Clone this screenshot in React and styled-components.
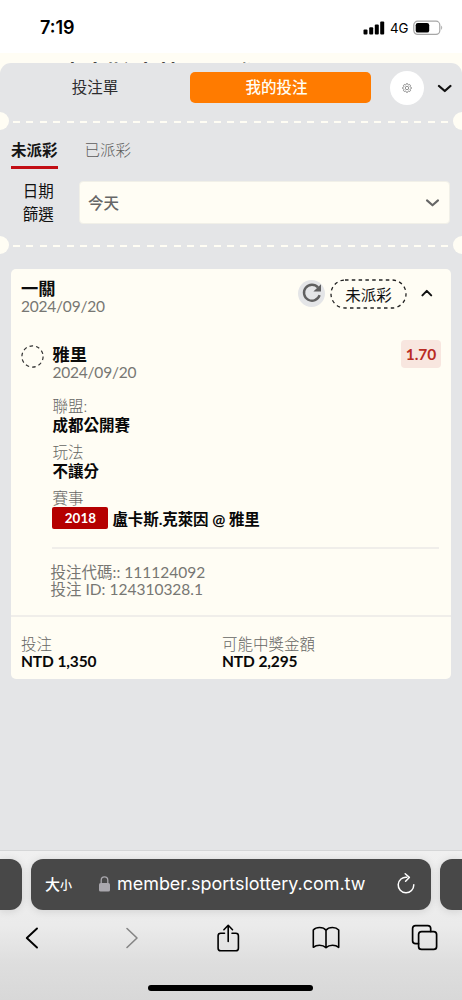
import React from 'react';
import styled, { createGlobalStyle } from 'styled-components';

const GlobalStyle = createGlobalStyle`
  * { box-sizing: border-box; }
  body {
    margin: 0;
    background: #fff;
    font-family: Lato, "Noto Sans CJK TC", sans-serif;
    -webkit-font-smoothing: antialiased;
  }
  svg { display: block; flex: none; }
`;

const Phone = styled.div`
  width: 462px;
  height: 1000px;
  overflow: hidden;
  display: flex;
  flex-direction: column;
  background: #fffdf4;
`;

const StatusBar = styled.header`
  height: 53px;
  flex: none;
  display: flex;
  align-items: center;
  justify-content: space-between;
  padding: 2px 18px 0 40px;
  background: #fff;
  font-family: Inter, sans-serif;
  color: #000;
`;

const Clock = styled.span`
  font-size: 18px;
  font-weight: 600;
`;

const StatusIcons = styled.div`
  display: flex;
  align-items: center;
  gap: 5px;
`;

const Network = styled.span`
  width: 18px;
  font-size: 13.3px;
  font-weight: 400;
  line-height: 16px;
`;

const PageBehind = styled.div`
  height: 10px;
  flex: none;
  overflow: hidden;
  padding-left: 62px;
  font-size: 22.4px;
  font-weight: 700;
  line-height: 30px;
  white-space: pre;
  color: #111;
`;

const PageTitle = styled.div`
  padding-top: 6px;
`;

const Sheet = styled.main`
  height: 787px;
  flex: none;
  border-radius: 11px 11px 0 0;
  background: #e4e5e7;
`;

const SheetHeader = styled.div`
  height: 49px;
  display: flex;
  align-items: center;
  padding-right: 9px;
`;

const HeaderTab = styled.div`
  width: ${(p) => (p.$active ? 181 : 190)}px;
  height: 31px;
  padding-right: ${(p) => (p.$active ? 8 : 0)}px;
  line-height: 31px;
  border-radius: 5px;
  text-align: center;
  font-size: 15.5px;
  font-weight: ${(p) => (p.$active ? 500 : 400)};
  color: ${(p) => (p.$active ? '#fffdf4' : '#2c2c2e')};
  background: ${(p) => (p.$active ? '#ff7b00' : 'transparent')};
`;

const SettingsButton = styled.div`
  width: 34px;
  height: 34px;
  margin: 0 13px 0 19px;
  border-radius: 50%;
  display: flex;
  align-items: center;
  justify-content: center;
  background: #fff;
`;

const Perforation = styled.div`
  height: 18px;
  display: flex;
  align-items: center;
  justify-content: space-between;
`;

const LowerPerforation = styled(Perforation)`
  margin-top: 12px;
`;

const Notch = styled.div`
  width: 9px;
  height: 18px;
  background: #fffdf4;
  border-radius: ${(p) => (p.$right ? '9px 0 0 9px' : '0 9px 9px 0')};
`;

const Dashes = styled.div`
  width: 436px;
  height: 2px;
  margin-top: 2px;
  background: repeating-linear-gradient(90deg, #fffdf4 0 7px, transparent 7px 13.38px);
`;

const SubTabs = styled.nav`
  height: 51px;
  display: flex;
  gap: 27px;
  padding: 9px 11px 0;
`;

const SubTab = styled.div`
  height: 30px;
  line-height: 22px;
  font-size: 15.5px;
  font-weight: ${(p) => (p.$active ? 700 : 300)};
  color: ${(p) => (p.$active ? '#151515' : '#5c5c5c')};
  border-bottom: 3.5px solid ${(p) => (p.$active ? '#c20d14' : 'transparent')};
`;

const FilterRow = styled.div`
  height: 43px;
  display: flex;
  align-items: center;
  padding-right: 12px;
`;

const FilterLabel = styled.div`
  width: 78.5px;
  padding-right: 2px;
  font-size: 15.5px;
  line-height: 22.5px;
  text-align: center;
  color: #111;
`;

const Select = styled.div`
  flex: 1;
  height: 43px;
  display: flex;
  align-items: center;
  justify-content: space-between;
  padding: 0 9px 1px 8.5px;
  border: 1px solid #f1f0e8;
  border-radius: 4px;
  background: #fffdf4;
  font-size: 15.5px;
  font-weight: 500;
  color: #666;
`;

const Card = styled.section`
  width: 440px;
  height: 410px;
  margin: 15px 0 0 11px;
  border-radius: 5px;
  background: #fffdf4;
  display: flex;
  flex-direction: column;
`;

const CardHeader = styled.div`
  height: 68px;
  display: flex;
  justify-content: space-between;
  padding: 9px 17px 0 10px;
`;

const Actions = styled.div`
  height: 30px;
  display: flex;
  align-items: center;
`;

const RefreshButton = styled.div`
  width: 27px;
  height: 27px;
  margin: 0 5px 0 0;
  border-radius: 50%;
  display: flex;
  align-items: center;
  justify-content: center;
  background: #e4e5e7;
`;

const StatusPill = styled.div`
  position: relative;
  width: 77px;
  height: 30px;
  margin: 2px 13px 0 0;
  line-height: 32px;
  text-align: center;
  font-size: 15.5px;
  color: #111;
`;

const PillOutline = styled.svg`
  position: absolute;
  inset: 0;
`;

const Title = styled.div`
  height: 19px;
  line-height: 21px;
  font-size: 17.3px;
  font-weight: 700;
  color: #0c0c0c;
`;

const Caption = styled.div`
  height: 18px;
  line-height: 18px;
  font-size: 15.5px;
  font-weight: ${(p) => (p.$light ? 300 : 400)};
  color: ${(p) => (p.$light ? '#666663' : '#777773')};
  white-space: nowrap;
`;

const DateText = styled(Caption)`
  letter-spacing: -0.22px;
`;

const Code = styled(Caption)`
  height: 17px;
  line-height: 17px;
`;

const Value = styled.div`
  height: 20px;
  line-height: 20px;
  font-size: 15.5px;
  font-weight: 700;
  color: #080808;
  white-space: nowrap;
`;

const Amount = styled(Value)`
  line-height: 17px;
  letter-spacing: -0.1px;
`;

const MatchName = styled(Value)`
  line-height: 22px;
  letter-spacing: -0.08px;
`;

const Selection = styled.div`
  height: 52px;
  display: flex;
  padding: 8px 10px 0 10px;
`;

const SelectionInfo = styled.div`
  flex: 1;
  margin-top: -1px;
  padding-left: 8.5px;
`;

const Odds = styled.div`
  width: 40px;
  height: 28px;
  margin-top: -5px;
  line-height: 29px;
  text-align: center;
  border-radius: 4px;
  background: #f8e6df;
  color: #b92b23;
  font-size: 15.5px;
  font-weight: 700;
`;

const Details = styled.div`
  height: 160px;
  margin: 0 12px 0 41px;
  padding: 8px 0 0 0.4px;
  border-bottom: 2px solid #f0eeea;
`;

const Field = styled.div`
  height: 46px;
`;

const Match = styled.div`
  display: flex;
  align-items: center;
  gap: 4px;
  height: 22px;
`;

const MatchNumber = styled.span`
  width: 56px;
  height: 22px;
  line-height: 23px;
  border-radius: 2px;
  text-align: center;
  font-size: 13.4px;
  font-weight: 700;
  color: #fff;
  background: #b50000;
`;

const Codes = styled.div`
  height: 68px;
  padding: 15px 0 0 39.5px;
  border-bottom: 2px solid #f0eeea;
`;

const Totals = styled.div`
  display: flex;
  padding: 18px 10px 0;
`;

const Total = styled.div`
  width: 201px;
`;

const BrowserChrome = styled.footer`
  height: 150px;
  flex: none;
  padding-top: 8px;
  border-top: 1px solid #d5d6d7;
  background: linear-gradient(#f0f0f0 0, #ebebeb 50%, #dedede 75%, #d8d8d8 100%);
`;

const AddressRow = styled.div`
  height: 51px;
  display: flex;
  gap: 9px;
`;

const SideTab = styled.div`
  width: 22px;
  height: 51px;
  background: #484848;
  border-radius: ${(p) => (p.$right ? '12px 0 0 12px' : '0 12px 12px 0')};
  box-shadow: 0 1px 8px rgba(0, 0, 0, 0.12);
`;

const AddressBar = styled.div`
  width: 400px;
  height: 51px;
  display: flex;
  align-items: center;
  padding: 0 16px 2px 14px;
  border-radius: 12px;
  background: #484848;
  box-shadow: 0 1px 8px rgba(0, 0, 0, 0.12);
  color: #fff;
`;

const TextSize = styled.div`
  width: 54px;
  font-size: 15px;
  font-weight: 500;
  white-space: nowrap;
`;

const SmallGlyph = styled.span`
  font-size: 12px;
`;

const Url = styled.div`
  flex: 1;
  padding-left: 7px;
  font-family: Inter, sans-serif;
  font-size: 17.95px;
`;

const Toolbar = styled.div`
  height: 55px;
  margin-left: -17px;
  display: grid;
  grid-template-columns: repeat(5, 98px);
  align-items: center;
  justify-items: center;
`;

const HomeIndicator = styled.div`
  width: 165px;
  height: 6px;
  margin: 20px 0 0 148px;
  border-radius: 3px;
  background: #000;
`;

const line = { fill: 'none', strokeLinecap: 'round', strokeLinejoin: 'round' };

const gearPath = (() => {
  const points = [];
  for (let i = 0; i < 48; i += 1) {
    const a = (i / 48) * Math.PI * 2;
    const r = 3.95 + 0.5 * Math.max(-1, Math.min(1, 1.7 * Math.cos(a * 8)));
    points.push(`${(5 + r * Math.cos(a)).toFixed(2)} ${(5 + r * Math.sin(a)).toFixed(2)}`);
  }
  return `M${points.join('L')}Z`;
})();

const Signal = () => (
  <svg width="22" height="14" viewBox="0 0 22 14">
    <rect x="0.5" y="8.5" width="4" height="5" rx="1" />
    <rect x="6.2" y="6.3" width="4" height="7.2" rx="1" />
    <rect x="11.8" y="3.5" width="4" height="10" rx="1" />
    <rect x="17.2" y="0.6" width="4" height="12.9" rx="1" />
  </svg>
);

const Battery = () => (
  <svg width="31" height="16" viewBox="0 0 31 16">
    <rect x="0.8" y="1.2" width="26" height="13.2" rx="3.8" fill="none" stroke="#a6a6a6" strokeWidth="1.2" />
    <rect x="2.7" y="3" width="13.5" height="9.6" rx="2.2" />
    <path d="M28.2 5.6q2 2.2 0 4.4z" fill="#a6a6a6" />
  </svg>
);

export default function App() {
  return (
    <>
      <GlobalStyle />
      <Phone>
        <StatusBar>
          <Clock>7:19</Clock>
          <StatusIcons>
            <Signal />
            <Network>4G</Network>
            <Battery />
          </StatusIcons>
        </StatusBar>
        <PageBehind>
          <PageTitle>盧卡斯.克萊因 @ 雅里</PageTitle>
        </PageBehind>

        <Sheet>
          <SheetHeader>
            <HeaderTab>投注單</HeaderTab>
            <HeaderTab $active>我的投注</HeaderTab>
            <SettingsButton>
              <svg width="10" height="10" viewBox="0 0 10 10" fill="none" stroke="#666" strokeWidth="0.7">
                <path d={gearPath} />
                <circle cx="5" cy="5" r="1.7" />
              </svg>
            </SettingsButton>
            <svg width="15" height="10" viewBox="0 0 15 10" stroke="#111" strokeWidth="2.3" {...line}>
              <path d="M2 3 7.8 8 13.4 3" />
            </svg>
          </SheetHeader>
          <Perforation>
            <Notch />
            <Dashes />
            <Notch $right />
          </Perforation>
          <SubTabs>
            <SubTab $active>未派彩</SubTab>
            <SubTab>已派彩</SubTab>
          </SubTabs>
          <FilterRow>
            <FilterLabel>日期<br />篩選</FilterLabel>
            <Select>
              今天
              <svg width="15" height="10" viewBox="0 0 15 10" stroke="#666" strokeWidth="2.1" {...line}>
                <path d="M2 3.4 7.5 8.3 13 3.4" />
              </svg>
            </Select>
          </FilterRow>
          <LowerPerforation>
            <Notch />
            <Dashes />
            <Notch $right />
          </LowerPerforation>

          <Card>
            <CardHeader>
              <div>
                <Title>一關</Title>
                <DateText>2024/09/20</DateText>
              </div>
              <Actions>
                <RefreshButton>
                  <svg width="20" height="20" viewBox="0 0 20 20">
                    <path d="M16 4.4A8 8 0 1 0 17.6 12.2" fill="none" stroke="#606060" strokeWidth="2.4" />
                    <path d="M19 1.2V8.6H11.4Z" fill="#606060" />
                  </svg>
                </RefreshButton>
                <StatusPill>
                  <PillOutline width="77" height="30" viewBox="0 0 77 30">
                    <rect x="1" y="1" width="75" height="28" rx="14" fill="none" stroke="#222" strokeWidth="1.3" strokeDasharray="3.5 3.3" />
                  </PillOutline>
                  未派彩
                </StatusPill>
                <svg width="14" height="10" viewBox="0 0 14 10" stroke="#111" strokeWidth="2" {...line}>
                  <path d="M2.4 7.4 6.8 2.9 11.2 7.4" />
                </svg>
              </Actions>
            </CardHeader>

            <Selection>
              <svg width="23" height="23" viewBox="0 0 23 23">
                <circle cx="11.5" cy="11.5" r="10.6" fill="none" stroke="#333" strokeWidth="1.2" strokeDasharray="3.6 3.06" />
              </svg>
              <SelectionInfo>
                <Title>雅里</Title>
                <DateText>2024/09/20</DateText>
              </SelectionInfo>
              <Odds>1.70</Odds>
            </Selection>

            <Details>
              <Field>
                <Caption $light>聯盟:</Caption>
                <Value>成都公開賽</Value>
              </Field>
              <Field>
                <Caption $light>玩法</Caption>
                <Value>不讓分</Value>
              </Field>
              <Caption $light>賽事</Caption>
              <Match>
                <MatchNumber>2018</MatchNumber>
                <MatchName>盧卡斯.克萊因 @ 雅里</MatchName>
              </Match>
            </Details>

            <Codes>
              <Code>投注代碼:: 111124092</Code>
              <Code>投注 ID: 124310328.1</Code>
            </Codes>

            <Totals>
              <Total>
                <Caption $light>投注</Caption>
                <Amount>NTD 1,350</Amount>
              </Total>
              <Total>
                <Caption $light>可能中獎金額</Caption>
                <Amount>NTD 2,295</Amount>
              </Total>
            </Totals>
          </Card>
        </Sheet>

        <BrowserChrome>
          <AddressRow>
            <SideTab />
            <AddressBar>
              <TextSize>大<SmallGlyph>小</SmallGlyph></TextSize>
              <svg width="11" height="16" viewBox="0 0 11 16">
                <rect x="0" y="7" width="11" height="8.6" rx="1.6" fill="#aaa8ae" />
                <path d="M2.2 7.5V4.2a3.3 3.3 0 0 1 6.6 0V7.5" fill="none" stroke="#aaa8ae" strokeWidth="1.3" />
              </svg>
              <Url>member.sportslottery.com.tw</Url>
              <svg width="18" height="22" viewBox="0 0 18 22" stroke="#fff" strokeWidth="1.5" {...line}>
                <path d="M9.8 4.2A7.8 7.8 0 1 0 16.8 11.8" />
                <path d="M8.2 0.8 12.3 4.4 8.6 8.2" />
              </svg>
            </AddressBar>
            <SideTab $right />
          </AddressRow>
          <Toolbar>
            <svg width="16" height="22" viewBox="0 0 16 22" stroke="#000" strokeWidth="1.9" {...line}>
              <path d="M13 1.5 2.8 11 13 20.5" />
            </svg>
            <svg width="20" height="22" viewBox="0 0 20 22" stroke="#858585" strokeWidth="1.6" {...line}>
              <path d="M7 1.5 17 11 7 20.5" />
            </svg>
            <svg width="24" height="28" viewBox="0 0 24 28" stroke="#000" strokeWidth="1.6" {...line}>
              <path d="M8.5 9.2H4.7Q2.1 9.2 2.1 11.8V24.2Q2.1 26.8 4.7 26.8H19.8Q22.4 26.8 22.4 24.2V11.8Q22.4 9.2 19.8 9.2H16" />
              <path d="M12.2 17.5V1.5M7.9 5.7 12.2 1.3 16.5 5.7" />
            </svg>
            <svg width="28" height="24" viewBox="0 0 28 24" stroke="#000" strokeWidth="1.6" {...line}>
              <path d="M14 4.2Q12 1.5 7.5 1.5 3.5 1.5 1.3 4V21.3Q3.8 19.2 7.5 19.2 11.5 19.2 14 21.6 16.5 19.2 20.5 19.2 24.2 19.2 26.7 21.3V4Q24.5 1.5 20.5 1.5 16 1.5 14 4.2ZV21.6" />
            </svg>
            <svg width="27" height="27" viewBox="0 0 27 27" stroke="#000" strokeWidth="1.7" {...line}>
              <path d="M7.5 19.7H4.6Q1.6 19.7 1.6 16.7V4.6Q1.6 1.6 4.6 1.6H16.7Q19.7 1.6 19.7 4.6V7.4" />
              <rect x="7.6" y="7.6" width="18" height="17.8" rx="3" />
            </svg>
          </Toolbar>
          <HomeIndicator />
        </BrowserChrome>
      </Phone>
    </>
  );
}
